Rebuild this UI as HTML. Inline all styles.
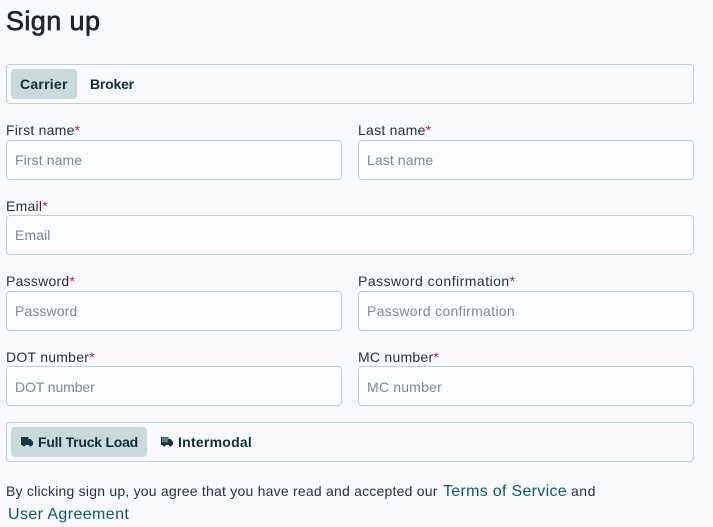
<!DOCTYPE html>
<html lang="en"><head><meta charset="utf-8"><title>Sign up</title>
<style>
html,body{margin:0;padding:0}
body{width:713px;height:527px;overflow:hidden;position:relative;background:#f8fafc;font-family:"Liberation Sans",sans-serif;color:#1f2933}
h1,label,p,a,span.t{position:absolute;margin:0;white-space:nowrap}
h1{left:6px;top:5px;font-size:27px;line-height:32px;font-weight:400;color:#1d2630;-webkit-text-stroke:.7px #1d2630;letter-spacing:.4px}
.box{position:absolute;box-sizing:border-box;left:6px;width:688px;height:40px;border:1px solid #bccddb;border-radius:4px;background:#f8fafc}
.act{position:absolute;top:69px;left:11px;height:30px;background:#c9dadd;border-radius:4px}
span.t{font-size:14px;line-height:20px;font-weight:700;color:#0f2e38}
label{font-size:14px;line-height:20px;color:#27323c;letter-spacing:.25px}
label b{font-weight:400;color:#b3264a}
input{position:absolute;box-sizing:border-box;height:40px;border:1px solid #bccddb;border-radius:4px;background:#fcfdfe;padding:0 8px;margin:0;font:14px "Liberation Sans",sans-serif;letter-spacing:.1px;outline:0}
input::placeholder{color:#7d8790;opacity:1}
.l{left:6px;width:336px}.r{left:358px;width:336px}.f{left:6px;width:688px}
p{left:6px;top:481px;font-size:14px;line-height:20px;color:#27323c;letter-spacing:.22px}
a{font-size:16px;line-height:22px;color:#0f5a6e;text-decoration:none;letter-spacing:.3px}
svg{position:absolute}
</style></head><body>
<h1>Sign up</h1>

<div class="box" style="top:64px"></div>
<div class="act" style="width:66px"></div>
<span class="t" style="left:20px;top:74px;letter-spacing:.25px">Carrier</span>
<span class="t" style="left:90px;top:74px;letter-spacing:-.2px">Broker</span>

<label style="left:6px;top:120px">First name<b>*</b></label>
<input class="l" style="top:140px" placeholder="First name">
<label style="left:358px;top:120px">Last name<b>*</b></label>
<input class="r" style="top:140px" placeholder="Last name">

<label style="left:6px;top:196px">Email<b>*</b></label>
<input class="f" style="top:215px" placeholder="Email">

<label style="left:6px;top:271px">Password<b>*</b></label>
<input class="l" style="top:291px" placeholder="Password">
<label style="left:358px;top:271px;letter-spacing:.48px">Password confirmation<b>*</b></label>
<input class="r" style="top:291px;letter-spacing:.3px" placeholder="Password confirmation">

<label style="left:6px;top:347px">DOT number<b>*</b></label>
<input class="l" style="top:366px;padding-top:2px;letter-spacing:-.1px" placeholder="DOT number">
<label style="left:358px;top:347px">MC number<b>*</b></label>
<input class="r" style="top:366px;padding-top:2px;letter-spacing:.2px" placeholder="MC number">

<div class="box" style="top:422px"></div>
<div class="act" style="top:427px;width:136px"></div>
<svg style="left:21px;top:437px" width="12" height="10" viewBox="0 0 12 10"><path fill="#16383f" d="M0 0h7.500v2h2L12 4.800V8h-1a1.500 1.500 0 0 1-3 0H4.500a1.500 1.500 0 0 1-3 0H0z"/></svg>
<span class="t" style="left:38px;top:432px;letter-spacing:-.23px">Full Truck Load</span>
<svg style="left:161px;top:437px" width="12" height="10" viewBox="0 0 12 10"><path fill="#16383f" d="M0 0h7.500v2h2L12 4.800V8h-1a1.500 1.500 0 0 1-3 0H4.500a1.500 1.500 0 0 1-3 0H0z"/><path stroke="#f8fafc" stroke-width=".7" d="M2 .5v5M4 .5v5M6 .5v5"/></svg>
<span class="t" style="left:178px;top:432px;letter-spacing:.25px">Intermodal</span>

<p>By clicking sign up, you agree that you have read and accepted our</p>
<a href="#" style="left:443px;top:481px">Terms of Service</a>
<p style="left:571px;letter-spacing:.5px">and</p>
<a href="#" style="left:8px;top:504px;letter-spacing:.4px">User Agreement</a>
</body></html>
